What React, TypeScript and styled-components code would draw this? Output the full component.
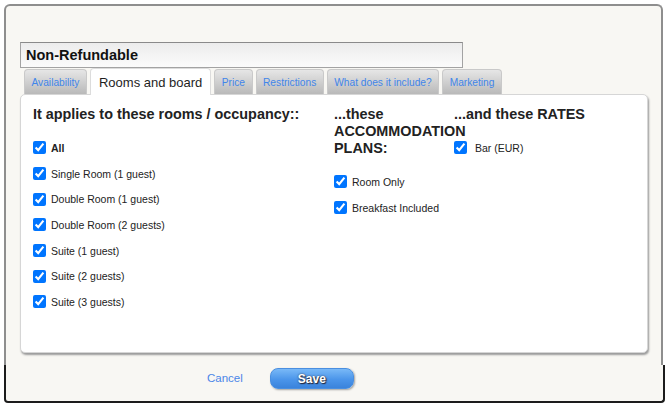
import React from "react";
import styled, { createGlobalStyle } from "styled-components";

const Global = createGlobalStyle`
  html, body { margin: 0; padding: 0; background: #ffffff; }
  body { font-family: "Liberation Sans", Arial, sans-serif; color: #222; }
  * { box-sizing: border-box; }
`;

const Frame = styled.div`
  display: flex;
  flex-direction: column;
  align-items: flex-start;
  padding: 4px 0 0 4px;
`;

const Upper = styled.div`
  width: 659px;
  background: #f8f7f3;
  border: 2px solid #8e8e8e;
  border-bottom: none;
  border-radius: 6px 6px 0 0;
  padding: 36px 12px 12px 14px;
  display: flex;
  flex-direction: column;
`;

const TitleInput = styled.input`
  width: 443px;
  height: 26px;
  border: 1px solid #a3a3a3;
  border-top-color: #8a8a8a;
  background: linear-gradient(#ececec, #fbfbfb);
  font-family: "Liberation Sans", Arial, sans-serif;
  font-weight: bold;
  font-size: 14.5px;
  color: #111;
  padding: 0 5px;
  outline: none;
`;

const TabRow = styled.div`
  display: flex;
  align-items: flex-end;
  gap: 3px;
  height: 26px;
  padding-left: 4px;
`;

const Tab = styled.div<{ $active?: boolean }>`
  height: ${(p) => (p.$active ? "27px" : "25px")};
  margin-bottom: ${(p) => (p.$active ? "-1px" : "0")};
  padding: 0 ${(p) => (p.$active ? "8px" : "6.5px")};
  display: flex;
  align-items: center;
  border: 1px solid ${(p) => (p.$active ? "#dcdcdc" : "#c9c9c9")};
  border-bottom: none;
  border-radius: 4px 4px 0 0;
  background: ${(p) =>
    p.$active ? "#ffffff" : "linear-gradient(#e6e6e6, #b9b9b9)"};
  color: ${(p) => (p.$active ? "#1e1e1e" : "#4185ea")};
  font-size: ${(p) => (p.$active ? "13px" : "10.2px")};
  padding-top: ${(p) => (p.$active ? "0" : "1px")};
  white-space: nowrap;
  position: relative;
  z-index: ${(p) => (p.$active ? 2 : 1)};
`;

const Panel = styled.div`
  width: 628px;
  height: 259px;
  background: #ffffff;
  border: 1px solid #d6d6d6;
  border-radius: 5px;
  box-shadow: 1px 2px 2px #9a9a9a;
  padding: 11px 12px 0 12px;
  display: grid;
  grid-template-columns: 301px 120px 1fr;
  align-items: start;
`;

const Column = styled.div`
  display: flex;
  flex-direction: column;
`;

const Heading = styled.div`
  font-weight: bold;
  font-size: 14.4px;
  line-height: 17px;
  color: #222;
  margin-bottom: 12px;
`;

const Row = styled.label<{ $gap?: number }>`
  display: flex;
  align-items: center;
  height: 25.7px;
  gap: ${(p) => p.$gap ?? 5}px;
  font-size: 10.5px;
  color: #222;
`;

const Check = styled.input`
  margin: 0;
  width: 13px;
  height: 13px;
  flex: none;
`;

const LabelText = styled.span<{ $bold?: boolean }>`
  font-weight: ${(p) => (p.$bold ? "bold" : "normal")};
`;

const Footer = styled.div`
  width: 661px;
  height: 38px;
  background: #f8f7f3;
  border: 2px solid #1c1c1c;
  border-top: none;
  border-radius: 0 0 4px 4px;
  display: flex;
  align-items: flex-start;
  padding: 3px 0 0 201px;
  gap: 27px;
`;

const CancelLink = styled.a`
  color: #4a86e8;
  font-size: 11.5px;
  text-decoration: none;
  line-height: 21px;
  cursor: pointer;
`;

const SaveButton = styled.button`
  width: 84px;
  height: 21px;
  border: 1px solid #4a8fe0;
  border-radius: 8px;
  background: linear-gradient(#79b9f7, #4b95ea 55%, #3a83dc);
  box-shadow: 1px 1px 2px rgba(0, 0, 0, 0.35);
  color: #ffffff;
  font-family: "Liberation Sans", Arial, sans-serif;
  font-weight: bold;
  font-size: 12px;
  text-shadow: 0 0 2px #334, 1px 1px 1px #223;
  padding: 0;
`;

type Item = { label: string; bold?: boolean };

const rooms: Item[] = [
  { label: "All", bold: true },
  { label: "Single Room (1 guest)" },
  { label: "Double Room (1 guest)" },
  { label: "Double Room (2 guests)" },
  { label: "Suite (1 guest)" },
  { label: "Suite (2 guests)" },
  { label: "Suite (3 guests)" },
];

const plans: Item[] = [{ label: "Room Only" }, { label: "Breakfast Included" }];
const rates: Item[] = [{ label: "Bar (EUR)" }];

const tabs = [
  "Availability",
  "Rooms and board",
  "Price",
  "Restrictions",
  "What does it include?",
  "Marketing",
];

function CheckList({ items, gap }: { items: Item[]; gap?: number }) {
  return (
    <>
      {items.map((it) => (
        <Row key={it.label} $gap={gap}>
          <Check type="checkbox" defaultChecked />
          <LabelText $bold={it.bold}>{it.label}</LabelText>
        </Row>
      ))}
    </>
  );
}

export default function App() {
  return (
    <>
      <Global />
      <Frame>
        <Upper>
          <TitleInput defaultValue="Non-Refundable" />
          <TabRow>
            {tabs.map((t) => (
              <Tab key={t} $active={t === "Rooms and board"}>
                {t}
              </Tab>
            ))}
          </TabRow>
          <Panel>
            <Column>
              <Heading>It applies to these rooms / occupancy::</Heading>
              <CheckList items={rooms} />
            </Column>
            <Column>
              <Heading>...these ACCOMMODATION PLANS:</Heading>
              <CheckList items={plans} />
            </Column>
            <Column>
              <Heading>...and these RATES</Heading>
              <CheckList items={rates} gap={8} />
            </Column>
          </Panel>
        </Upper>
        <Footer>
          <CancelLink>Cancel</CancelLink>
          <SaveButton>Save</SaveButton>
        </Footer>
      </Frame>
    </>
  );
}
